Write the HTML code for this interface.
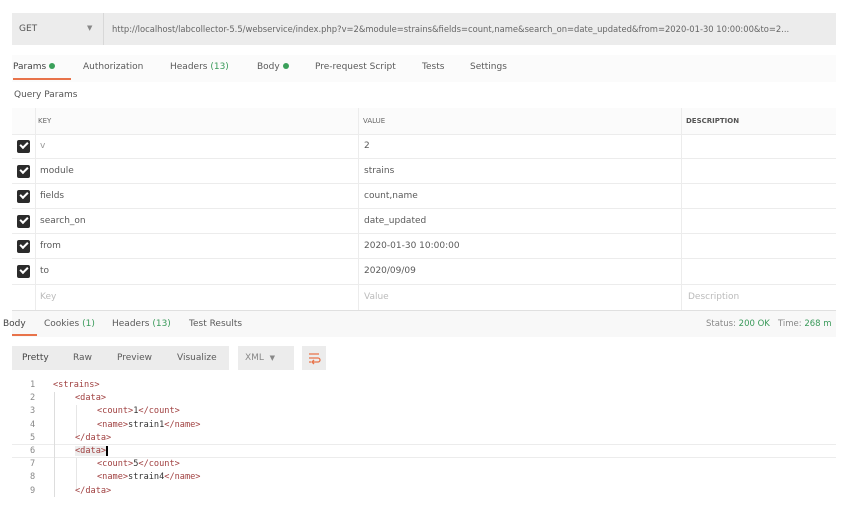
<!DOCTYPE html>
<html><head><meta charset="utf-8"><style>
*{margin:0;padding:0;box-sizing:border-box}
body{width:863px;height:507px;background:#fff;font-family:"DejaVu Sans","Liberation Sans",sans-serif;font-size:9px;color:#5a5a5a;position:relative;overflow:hidden}
.a{position:absolute;white-space:nowrap}
.g{color:#3a9a5a}
.dot{display:inline-block;width:6px;height:6px;border-radius:50%;background:#3aa05a;margin-left:3px;vertical-align:0}
.cb{position:absolute;left:17px;width:13px;height:13px;background:#2b2b2b;border-radius:2px}
.cb:after{content:"";position:absolute;left:3px;top:2px;width:6px;height:3px;border-left:2px solid #fff;border-bottom:2px solid #fff;transform:rotate(-45deg)}
.hl{position:absolute;left:12px;width:824px;height:1px;background:#ececec}
.mono{font-family:"DejaVu Sans Mono","Liberation Mono",monospace;font-size:8.6px}
.t{color:#a04040}
.l{height:13.2px}
.i1{padding-left:22px}.i2{padding-left:44px}
</style></head><body>
<div class="a" style="left:12px;top:13px;width:824px;height:32px;background:#ececec"></div>
<div class="a" style="left:103px;top:13px;width:1px;height:32px;background:#d8d8d8"></div>
<div class="a" style="left:19px;top:24px;color:#555">GET</div>
<div class="a" style="left:87px;top:24px;font-size:7px;color:#888">▼</div>
<div class="a" style="left:112px;top:24px;font-size:8.4px;color:#666">http://localhost/labcollector-5.5/webservice/index.php?v=2&amp;module=strains&amp;fields=count,name&amp;search_on=date_updated&amp;from=2020-01-30 10:00:00&amp;to=2...</div>
<div class="a" style="left:12px;top:55px;width:824px;height:27px;background:#fbfbfb"></div>
<div class="a" style="left:13px;top:62px;color:#444">Params<span class="dot"></span></div>
<div class="a" style="left:13px;top:78px;width:58px;height:2px;background:#e8734a"></div>
<div class="a" style="left:83px;top:62px">Authorization</div>
<div class="a" style="left:170px;top:62px">Headers <span class="g">(13)</span></div>
<div class="a" style="left:257px;top:62px">Body<span class="dot"></span></div>
<div class="a" style="left:315px;top:62px">Pre-request Script</div>
<div class="a" style="left:422px;top:62px">Tests</div>
<div class="a" style="left:470px;top:62px">Settings</div>
<div class="a" style="left:14px;top:90px;color:#555">Query Params</div>
<div class="a" style="left:12px;top:108px;width:824px;height:26px;background:#fbfbfb"></div>
<div class="a" style="left:35px;top:108px;width:1px;height:202px;background:#ececec"></div>
<div class="a" style="left:358px;top:108px;width:1px;height:202px;background:#ececec"></div>
<div class="a" style="left:681px;top:108px;width:1px;height:202px;background:#ececec"></div>
<div class="a" style="left:38px;top:117px;font-size:7px;color:#666">KEY</div>
<div class="a" style="left:363px;top:117px;font-size:7px;color:#666">VALUE</div>
<div class="a" style="left:686px;top:117px;font-size:7px;color:#555;font-weight:bold">DESCRIPTION</div>
<div class="hl" style="top:134px"></div>
<div class="hl" style="top:158px"></div><div class="hl" style="top:183px"></div><div class="hl" style="top:208px"></div><div class="hl" style="top:233px"></div><div class="hl" style="top:258px"></div><div class="hl" style="top:284px"></div><div class="hl" style="top:310px;background:#e0e0e0"></div>
<div class="cb" style="top:140px"></div><div class="a" style="left:40px;top:141px;color:#999">v</div><div class="a" style="left:364px;top:141px">2</div>
<div class="cb" style="top:165px"></div><div class="a" style="left:40px;top:166px">module</div><div class="a" style="left:364px;top:166px">strains</div>
<div class="cb" style="top:190px"></div><div class="a" style="left:40px;top:191px">fields</div><div class="a" style="left:364px;top:191px">count,name</div>
<div class="cb" style="top:215px"></div><div class="a" style="left:40px;top:216px">search_on</div><div class="a" style="left:364px;top:216px">date_updated</div>
<div class="cb" style="top:240px"></div><div class="a" style="left:40px;top:241px">from</div><div class="a" style="left:364px;top:241px">2020-01-30 10:00:00</div>
<div class="cb" style="top:265px"></div><div class="a" style="left:40px;top:266px">to</div><div class="a" style="left:364px;top:266px">2020/09/09</div>
<div class="a" style="left:40px;top:292px;color:#bbb">Key</div><div class="a" style="left:364px;top:292px;color:#bbb">Value</div><div class="a" style="left:688px;top:292px;color:#bbb">Description</div>
<div class="a" style="left:12px;top:311px;width:824px;height:26px;background:#f8f8f8"></div>
<div class="a" style="left:3px;top:319px;color:#444">Body</div>
<div class="a" style="left:12px;top:334px;width:25px;height:2px;background:#e8734a"></div>
<div class="a" style="left:44px;top:319px">Cookies <span class="g">(1)</span></div>
<div class="a" style="left:112px;top:319px">Headers <span class="g">(13)</span></div>
<div class="a" style="left:189px;top:319px">Test Results</div>
<div class="a" style="left:706px;top:319px;font-size:8.5px;color:#888">Status: <span class="g">200 OK</span>&nbsp;&nbsp;&nbsp;Time: <span class="g">268 m</span></div>
<div class="a" style="left:12px;top:346px;width:217px;height:24px;background:#ececec"></div>
<div class="a" style="left:22px;top:353px;color:#444">Pretty</div>
<div class="a" style="left:73px;top:353px">Raw</div>
<div class="a" style="left:117px;top:353px">Preview</div>
<div class="a" style="left:177px;top:353px">Visualize</div>
<div class="a" style="left:238px;top:346px;width:56px;height:24px;background:#ececec"></div>
<div class="a" style="left:245px;top:353px;color:#888">XML &nbsp;<span style="font-size:7px">▼</span></div>
<div class="a" style="left:302px;top:346px;width:24px;height:24px;background:#ececec"></div>
<svg class="a" style="left:306px;top:350px" width="16" height="16" viewBox="0 0 16 16"><path d="M3 4h10M3 8h9a2 2 0 0 1 0 4h-5M3 12h2M8 10l-2 2 2 2" stroke="#e8734a" stroke-width="1.3" fill="none"/></svg>
<div class="a" style="left:12px;top:444px;width:824px;height:1px;background:#ececec"></div>
<div class="a" style="left:12px;top:457px;width:824px;height:1px;background:#ececec"></div>
<div class="a" style="left:54px;top:392px;width:1px;height:105px;background:#ddd"></div>
<div class="a" style="left:76px;top:405px;width:1px;height:31px;background:#e6e6e6"></div>
<div class="a" style="left:76px;top:458px;width:1px;height:31px;background:#e6e6e6"></div>
<div class="a mono" style="left:30px;top:379px;line-height:13.2px;color:#888">1<br>2<br>3<br>4<br>5<br>6<br>7<br>8<br>9</div>
<div class="a mono" style="left:53px;top:379px;line-height:13.2px;color:#333">
<div class="l"><span class="t">&lt;strains&gt;</span></div>
<div class="l i1"><span class="t">&lt;data&gt;</span></div>
<div class="l i2"><span class="t">&lt;count&gt;</span>1<span class="t">&lt;/count&gt;</span></div>
<div class="l i2"><span class="t">&lt;name&gt;</span>strain1<span class="t">&lt;/name&gt;</span></div>
<div class="l i1"><span class="t">&lt;/data&gt;</span></div>
<div class="l i1"><span class="t" style="background:#eee">&lt;data&gt;</span><span style="border-left:2px solid #000"></span></div>
<div class="l i2"><span class="t">&lt;count&gt;</span>5<span class="t">&lt;/count&gt;</span></div>
<div class="l i2"><span class="t">&lt;name&gt;</span>strain4<span class="t">&lt;/name&gt;</span></div>
<div class="l i1"><span class="t">&lt;/data&gt;</span></div></div>
</body></html>
